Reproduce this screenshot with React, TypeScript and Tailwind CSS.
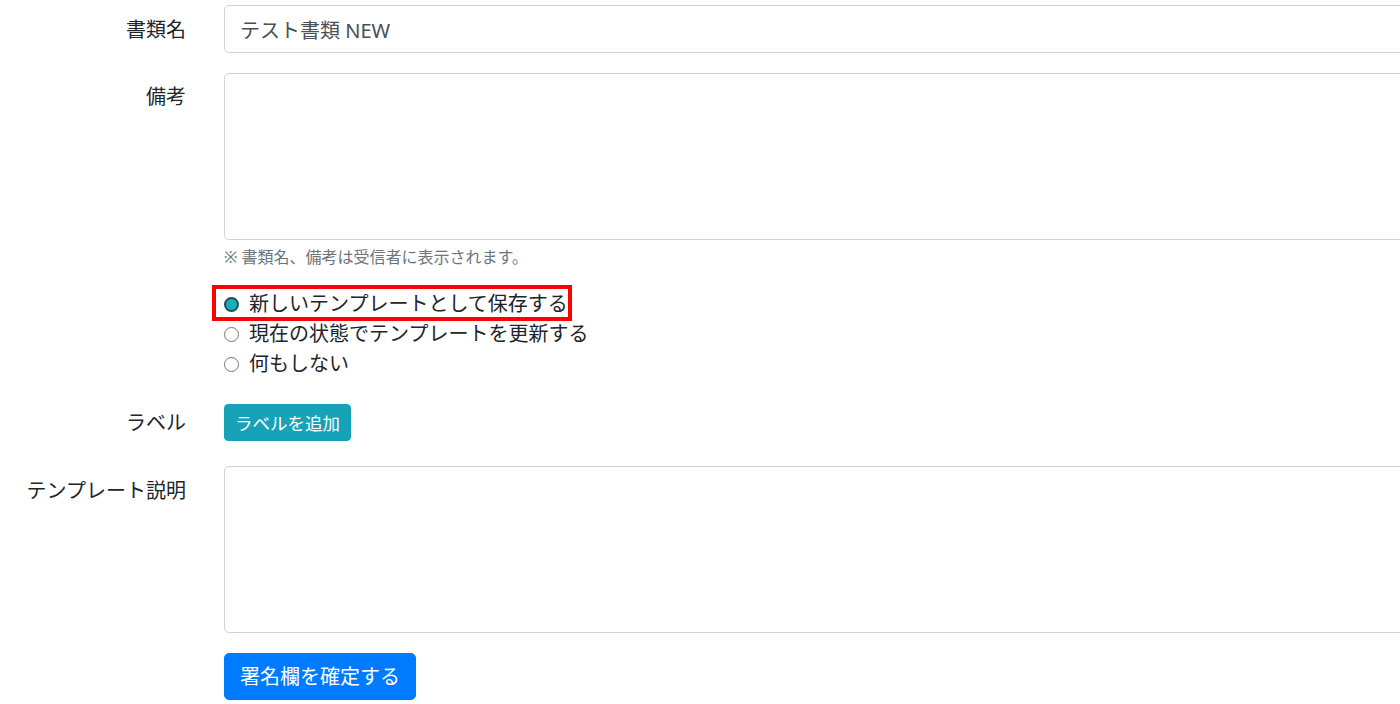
import { useState } from "react";

type Option = {
  value: string;
  label: string;
};

const options: Option[] = [
  { value: "new", label: "新しいテンプレートとして保存する" },
  { value: "update", label: "現在の状態でテンプレートを更新する" },
  { value: "none", label: "何もしない" },
];

const fieldClass =
  "block w-[1200px] rounded-[5px] border border-[#ced4da] bg-white px-[15px] text-[20px] leading-[30px] text-[#495057] outline-none";

function Radio({ checked }: { checked: boolean }) {
  return checked ? (
    <span className="box-border block h-[15px] w-[15px] rounded-full border-2 border-[#1d4f56] bg-[#19aebd]" />
  ) : (
    <span className="box-border block h-[15px] w-[15px] rounded-full border border-[#767676] bg-white" />
  );
}

export default function App() {
  const [mode, setMode] = useState("new");

  return (
    <div
      className="h-[704px] w-[1400px] overflow-hidden bg-white pt-[5px] text-[20px] leading-[30px] text-[#212529]"
      style={{ fontFamily: '"Noto Sans", "Noto Sans CJK JP", sans-serif' }}
    >
      {/* 書類名 */}
      <div className="flex">
        <label className="w-[205px] shrink-0 pr-[19px] pt-[10px] text-right">書類名</label>
        <div className="pl-[19px]">
          <input
            className={`${fieldClass} h-[48px] py-[7px]`}
            defaultValue="テスト書類 NEW"
          />
        </div>
      </div>

      {/* 備考 */}
      <div className="mt-[20px] flex">
        <label className="w-[205px] shrink-0 pr-[19px] pt-[9px] text-right">備考</label>
        <div className="pl-[19px]">
          <textarea className={`${fieldClass} h-[167px] resize-none py-[7px]`} />
          <p className="mt-[5px] text-[16px] leading-[24px] text-[#6c757d]">
            ※ 書類名、備考は受信者に表示されます。
          </p>

          <div className="mt-[20px]">
            {options.map((option, i) => (
              <div key={option.value} className="relative">
                <button
                  type="button"
                  onClick={() => setMode(option.value)}
                  className="flex h-[30px] items-center gap-[10px] text-left"
                >
                  <Radio checked={mode === option.value} />
                  <span>{option.label}</span>
                </button>
                {i === 0 && (
                  <div className="pointer-events-none absolute left-[-12px] top-[-4px] h-[36px] w-[360px] border-4 border-[#ff0000]" />
                )}
              </div>
            ))}
          </div>
        </div>
      </div>

      {/* ラベル */}
      <div className="mt-[25px] flex items-center">
        <label className="w-[205px] shrink-0 pr-[19px] text-right">ラベル</label>
        <div className="pl-[19px]">
          <button
            type="button"
            className="h-[37px] rounded-[4px] border border-[#17a2b8] bg-[#17a2b8] px-[10px] text-[17.5px] leading-[26px] text-white"
          >
            ラベルを追加
          </button>
        </div>
      </div>

      {/* テンプレート説明 */}
      <div className="mt-[25px] flex">
        <label className="w-[205px] shrink-0 pr-[19px] pt-[10px] text-right whitespace-nowrap">
          テンプレート説明
        </label>
        <div className="pl-[19px]">
          <textarea className={`${fieldClass} h-[167px] resize-none py-[7px]`} />
          <button
            type="button"
            className="mt-[20px] h-[47px] rounded-[5px] border border-[#007bff] bg-[#007bff] px-[15px] text-[20px] leading-[30px] text-white"
          >
            署名欄を確定する
          </button>
        </div>
      </div>
    </div>
  );
}
